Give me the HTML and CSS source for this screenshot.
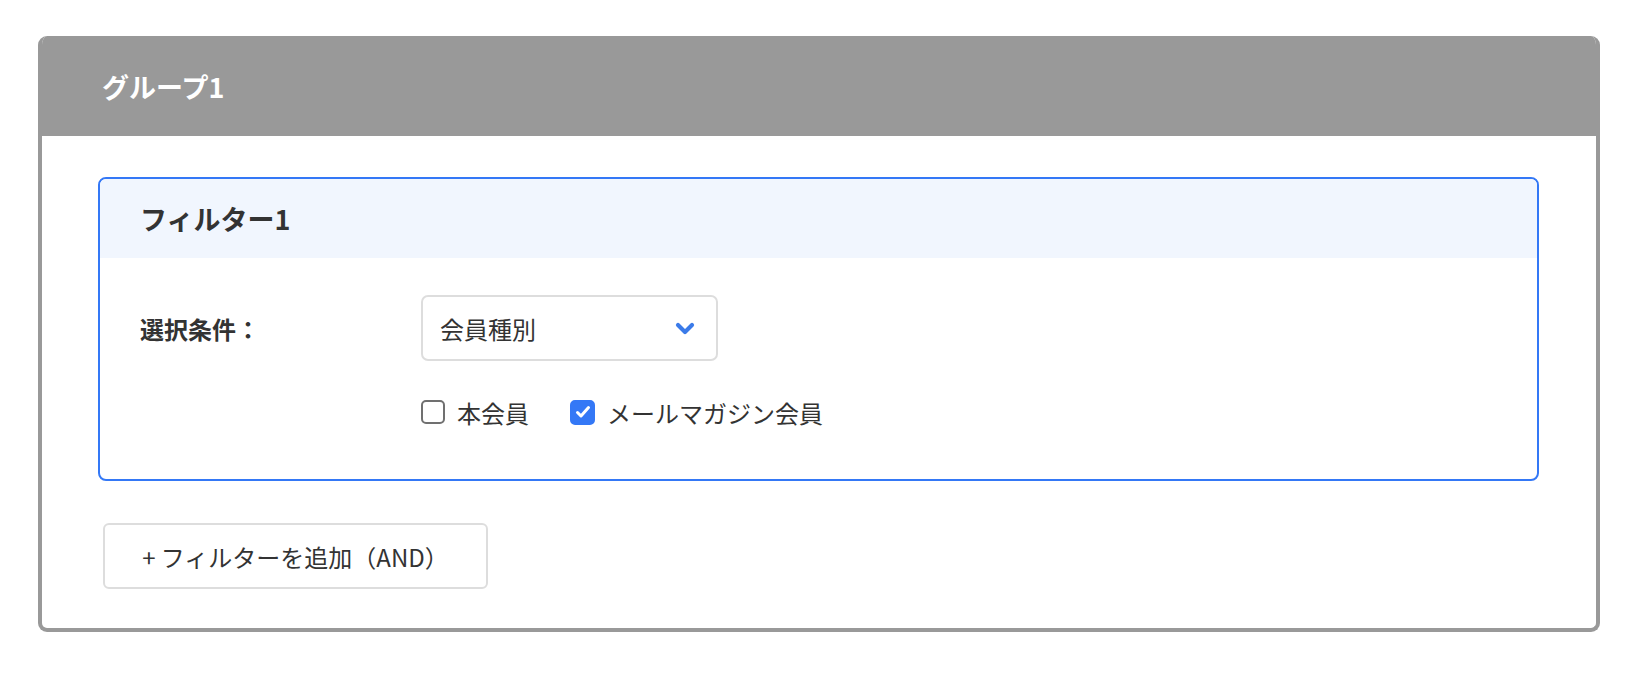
FILE: index.html
```html
<html>
<head>
  <meta charset="utf-8">
  <title>グループ</title>
  <link rel="stylesheet" href="styles.css">
</head>
<body>
  <div class="group">
    <div class="group-head">グループ1</div>

    <div class="group-body">
      <div class="filter">
        <div class="filter-head">フィルター1</div>

        <div class="filter-body">
          <div class="field-label">選択条件：</div>
          <div class="select">
            <span>会員種別</span>
            <svg class="chevron" width="20" height="13" viewBox="0 0 20 13">
              <path d="M3 3 L10 10 L17 3" fill="none" stroke="#3b7be9" stroke-width="4.2" stroke-linecap="round" stroke-linejoin="round"/>
            </svg>
          </div>

          <div></div>
          <div class="options">
            <label class="option">
              <span class="box"></span>
              本会員
            </label>
            <label class="option">
              <span class="box checked">
                <svg width="16" height="14" viewBox="0 0 16 14">
                  <path d="M2.5 7.5 L6 11 L13.5 2.5" fill="none" stroke="#fff" stroke-width="3" stroke-linecap="round" stroke-linejoin="round"/>
                </svg>
              </span>
              メールマガジン会員
            </label>
          </div>
        </div>
      </div>

      <button class="add-btn">+ フィルターを追加（AND）</button>
    </div>
  </div>
</body>
</html>
```

FILE: styles.css
```css
body {
  margin: 0;
  background: #fff;
  font-family: "Noto Sans CJK JP", "Noto Sans", sans-serif;
  color: #333;
}

.group {
  margin: 36px 46px 0 38px;
  border: 4px solid #999;
  border-top: 0;
  border-radius: 9px;
  overflow: hidden;
}
.group-head {
  background: #999;
  height: 100px;
  display: flex;
  align-items: center;
  padding-left: 60px;
  color: #fff;
  font-size: 27px;
  font-weight: bold;
}
.group-body {
  padding: 41px 57px 39px 56px;
}

.filter {
  border: 2px solid #3478f6;
  border-radius: 8px;
  overflow: hidden;
}
.filter-head {
  background: #f1f6fe;
  height: 79px;
  display: flex;
  align-items: center;
  padding-left: 40px;
  font-size: 27px;
  font-weight: bold;
}
.filter-body {
  display: grid;
  grid-template-columns: 281px 1fr;
  row-gap: 36px;
  align-items: center;
  padding: 37px 36px 52px 40px;
}
.field-label {
  font-size: 24px;
  font-weight: bold;
}

.select {
  width: 297px;
  height: 66px;
  box-sizing: border-box;
  border: 2px solid #ddd;
  border-radius: 7px;
  display: flex;
  align-items: center;
  justify-content: space-between;
  padding: 0 21px 0 17px;
  font-size: 24px;
}
.chevron {
  display: block;
}

.options {
  display: flex;
  align-items: center;
  gap: 41px;
  height: 30px;
}
.option {
  display: flex;
  align-items: center;
  gap: 12px;
  font-size: 24px;
}
.box {
  width: 24px;
  height: 24px;
  box-sizing: border-box;
  border: 2px solid #707070;
  border-radius: 5px;
  display: flex;
  align-items: center;
  justify-content: center;
}
.box.checked {
  background: #3478f6;
  border-color: #3478f6;
  width: 25px;
  height: 25px;
}

.add-btn {
  margin: 42px 0 0 5px;
  width: 385px;
  height: 66px;
  background: #fff;
  border: 2px solid #ddd;
  border-radius: 6px;
  font-family: inherit;
  font-size: 24px;
  color: #333;
  padding: 0;
  display: block;
}
```
